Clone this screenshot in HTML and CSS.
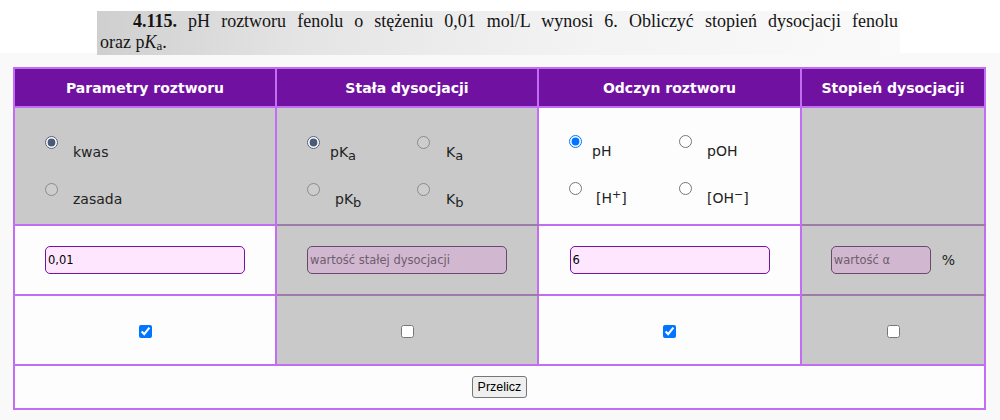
FILE: index.html
```html
<!DOCTYPE html>
<html lang="pl">
<head>
    <meta charset="UTF-8">
    <title>Stopień dysocjacji</title>
    <link rel="stylesheet" href="styles.css">
</head>
<body>
    <div class="task">
        <div class="scan">
            <p class="first"><b>4.115.</b> pH roztworu fenolu o stężeniu 0,01 mol/L wynosi 6. Obliczyć stopień dysocjacji fenolu</p>
            <p>oraz p<i>K</i><sub>a</sub>.</p>
        </div>
    </div>
    <table class="calc">
        <colgroup>
            <col class="c1"><col class="c2"><col class="c3"><col class="c4">
        </colgroup>
        <tr class="head">
            <th>Parametry roztworu</th>
            <th>Stała dysocjacji</th>
            <th>Odczyn roztworu</th>
            <th>Stopień dysocjacji</th>
        </tr>
        <tr class="opts">
            <td class="off">
                <div class="choices single">
                    <label class="choice"><input type="radio" name="typ" checked><span>kwas</span></label>
                    <label class="choice"><input type="radio" name="typ"><span>zasada</span></label>
                </div>
            </td>
            <td class="off join">
                <div class="choices">
                    <label class="choice"><input type="radio" name="stala" checked><span class="tight">pK<sub>a</sub></span></label>
                    <label class="choice"><input type="radio" name="stala"><span class="wide">K<sub>a</sub></span></label>
                    <label class="choice"><input type="radio" name="stala"><span>pK<sub>b</sub></span></label>
                    <label class="choice"><input type="radio" name="stala"><span class="wide">K<sub>b</sub></span></label>
                </div>
            </td>
            <td>
                <div class="choices live">
                    <label class="choice"><input type="radio" name="odczyn" checked><span class="tight">pH</span></label>
                    <label class="choice"><input type="radio" name="odczyn"><span>pOH</span></label>
                    <label class="choice"><input type="radio" name="odczyn"><span class="near">[H<sup>+</sup>]</span></label>
                    <label class="choice"><input type="radio" name="odczyn"><span>[OH<sup>−</sup>]</span></label>
                </div>
            </td>
            <td class="off join"></td>
        </tr>
        <tr class="values">
            <td><input type="text" class="field" value="0,01"></td>
            <td class="off join"><input type="text" class="field" placeholder="wartość stałej dysocjacji" disabled></td>
            <td><input type="text" class="field" value="6"></td>
            <td class="off join"><input type="text" class="field small" placeholder="wartość α" disabled><span class="pct">%</span></td>
        </tr>
        <tr class="checks">
            <td><input type="checkbox" checked></td>
            <td class="off"><input type="checkbox"></td>
            <td><input type="checkbox" checked></td>
            <td class="off"><input type="checkbox"></td>
        </tr>
        <tr class="actions">
            <td colspan="4"><button class="recalc">Przelicz</button></td>
        </tr>
    </table>
</body>
</html>
```

FILE: styles.css
```css
body {
    margin: 0;
    background-color: #f9f9f9;
    font-family: "DejaVu Sans", Verdana, sans-serif;
    font-size: 14px;
    color: #222222;
}
.task {
    height: 42px;
    padding-top: 11px;
    background-color: #ffffff;
}
.scan {
    margin-left: 97px;
    width: 803px;
    height: 44px;
    box-sizing: border-box;
    padding: 0 2px 0 3px;
    background: linear-gradient(to right, #cfcfcf, #e4e4e4 25%, #f3f3f3 60%, #fafafa);
}
.scan p {
    margin: 0;
    font-family: "Liberation Serif", "Times New Roman", serif;
    font-size: 18px;
    line-height: 21px;
    color: #141414;
}
.scan p.first {
    text-align: justify;
    text-align-last: justify;
    text-indent: 33px;
}
.scan sub {
    font-size: 13px;
    vertical-align: -2px;
    line-height: 0;
}
.calc {
    margin: 14px 0 0 13px;
    width: 973px;
    border-collapse: collapse;
    table-layout: fixed;
}
.c1, .c2 {
    width: 262px;
}
.c3 {
    width: 263px;
}
.calc th, .calc td {
    border: 2px solid #c36ef2;
    padding: 0;
    text-align: center;
    background-color: #fdfdfd;
}
.calc th {
    height: 37px;
    background-color: #7111a1;
    color: #ffffff;
    font-size: 14px;
    font-weight: bold;
}
.calc td.off {
    background-color: #c9c9c9;
}
.calc td.join {
    border-bottom-color: #9c7ba6;
}
.opts td {
    height: 116px;
    vertical-align: top;
}
.choices {
    display: grid;
    grid-template-columns: 110px 110px;
    grid-auto-rows: 25px;
    row-gap: 22px;
    padding: 28px 0 0 30px;
    text-align: left;
}
.choices.single {
    grid-template-columns: 200px;
}
.choices.live {
    padding-top: 27px;
}
.choice {
    display: flex;
    align-items: flex-start;
}
.choice input {
    margin: 0;
    width: 13px;
    height: 13px;
    accent-color: #4b5a77;
}
.off .choice input:not(:checked) {
    appearance: none;
    box-sizing: border-box;
    border: 1px solid #8a8a8a;
    border-radius: 50%;
    background-color: #cdcdcd;
}
.live .choice input {
    accent-color: #0075ff;
}
.choice span {
    margin-left: 15px;
    padding-top: 8px;
    line-height: 17px;
}
.choice span.tight {
    margin-left: 10px;
}
.choice span.near {
    margin-left: 14px;
}
.choice span.wide {
    margin-left: 16px;
}
.choice sub {
    font-size: 13px;
    vertical-align: -3px;
    line-height: 0;
}
.choice sup {
    font-size: 11px;
    vertical-align: 5px;
    line-height: 0;
}
.values td, .checks td {
    height: 68px;
    vertical-align: middle;
}
.field {
    width: 200px;
    height: 28px;
    box-sizing: border-box;
    border: 1px solid #7412a4;
    border-radius: 5px;
    padding: 0 2px;
    background-color: #ffe6ff;
    font-family: "DejaVu Sans", Verdana, sans-serif;
    font-size: 11.5px;
    color: #000000;
    vertical-align: middle;
}
.field:disabled {
    background-color: #d2b7d0;
    border-color: #684a6c;
}
.field::placeholder {
    color: #6c5e6c;
}
.field.small {
    width: 100px;
}
.pct {
    margin-left: 11px;
    vertical-align: middle;
}
.checks input {
    margin: 0;
    vertical-align: middle;
}
.actions td {
    height: 42px;
    vertical-align: middle;
}
.recalc {
    height: 22px;
    padding: 0 5px;
    border: 1px solid #767676;
    border-radius: 3px;
    background-color: #efefef;
    font-family: "Liberation Sans", Arial, sans-serif;
    font-size: 12.5px;
    color: #000000;
}
```
